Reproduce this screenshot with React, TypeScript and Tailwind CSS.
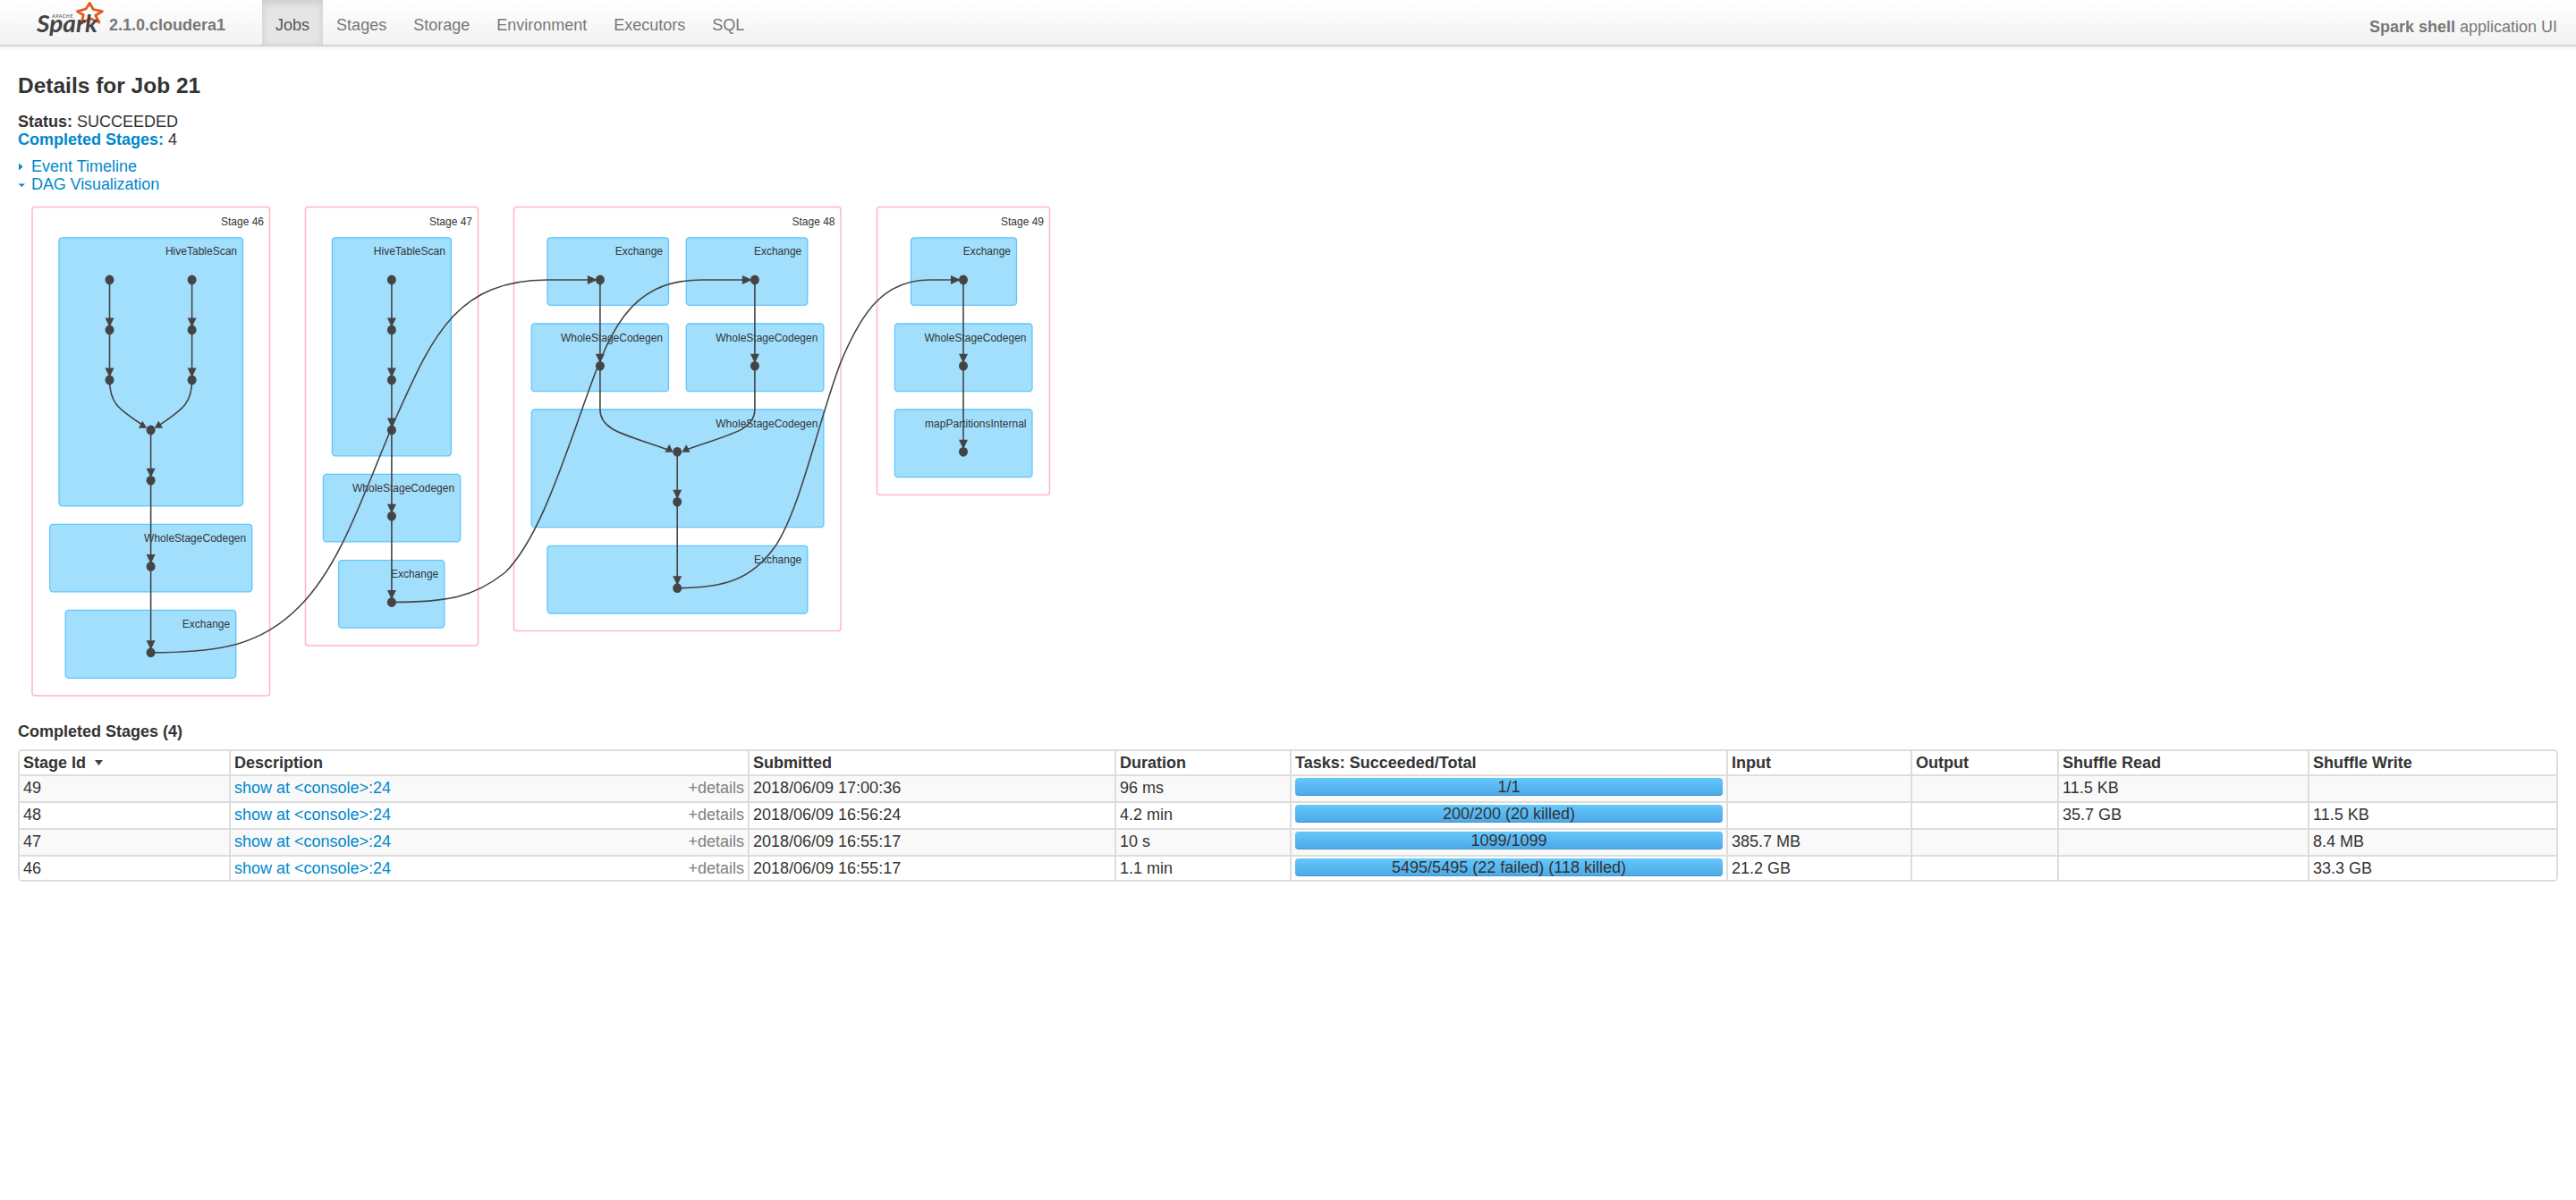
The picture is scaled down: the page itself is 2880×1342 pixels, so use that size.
import React from "react";

const FONT = "font-['Liberation_Sans',Arial,sans-serif]";

type Box = { x: number; y: number; w: number; h: number; label: string };

const stages: Box[] = [
  { x: 36, y: 231.5, w: 265.5, h: 546.5, label: "Stage 46" },
  { x: 341.5, y: 231.5, w: 193, h: 490.5, label: "Stage 47" },
  { x: 574.5, y: 231.5, w: 365.5, h: 474, label: "Stage 48" },
  { x: 980.5, y: 231.5, w: 193, h: 322, label: "Stage 49" },
];

const clusters: Box[] = [
  { x: 66, y: 265.8, w: 205.5, h: 300, label: "HiveTableScan" },
  { x: 55.7, y: 586.3, w: 226, h: 75.5, label: "WholeStageCodegen" },
  { x: 73.2, y: 682.4, w: 190.5, h: 76, label: "Exchange" },
  { x: 371.4, y: 265.8, w: 133, h: 244, label: "HiveTableScan" },
  { x: 361.4, y: 530.4, w: 153.2, h: 75.5, label: "WholeStageCodegen" },
  { x: 378.6, y: 626.6, w: 118.2, h: 75.5, label: "Exchange" },
  { x: 612, y: 265.8, w: 135.5, h: 75.5, label: "Exchange" },
  { x: 767.3, y: 265.8, w: 135.5, h: 75.5, label: "Exchange" },
  { x: 594.3, y: 362, w: 153.2, h: 75.7, label: "WholeStageCodegen" },
  { x: 767.3, y: 362, w: 153.6, h: 75.7, label: "WholeStageCodegen" },
  { x: 594.3, y: 458, w: 326.6, h: 131.7, label: "WholeStageCodegen" },
  { x: 612, y: 610.3, w: 290.8, h: 75.7, label: "Exchange" },
  { x: 1018.5, y: 265.8, w: 118, h: 75.5, label: "Exchange" },
  { x: 1000.4, y: 362, w: 153.6, h: 75.7, label: "WholeStageCodegen" },
  { x: 1000.4, y: 458, w: 153.6, h: 75.7, label: "mapPartitionsInternal" },
];

const dots: [number, number][] = [
  [122.5, 313], [122.5, 369], [122.5, 425], [214.6, 313], [214.6, 369], [214.6, 425],
  [168.6, 481], [168.6, 537.3], [168.6, 633.5], [168.6, 729.8],
  [437.9, 313], [437.9, 369], [437.9, 425], [437.9, 481], [437.9, 577.3], [437.9, 673.5],
  [670.9, 313], [843.9, 313], [670.9, 409.3], [843.9, 409.3], [757.2, 505.3], [757.2, 561.3], [757.2, 657.7],
  [1077, 313], [1077, 409.3], [1077, 505.3],
];

const edges: string[] = [
  "M122.5 313V369", "M122.5 369V425", "M214.6 313V369", "M214.6 369V425",
  "M122.5 425C122.5 452 134 458 159 475",
  "M214.6 425C214.6 452 203 458 179 475",
  "M168.6 481V537", "M168.6 537V633", "M168.6 633V729.8",
  "M437.9 313V369", "M437.9 369V425", "M437.9 425V481", "M437.9 481V577", "M437.9 577V673.5",
  "M670.9 313V409", "M843.9 313V409",
  "M670.9 409V458C670.9 482 700 486 747 503",
  "M843.9 409V458C843.9 482 814 486 767 503",
  "M757.2 505V561", "M757.2 561V657.7",
  "M1077 313V409", "M1077 409V505",
  "M168.6 729.8C245 729.8 292 722 335 678C385 628 412 535 445 462C483 378 510 313 612 313L660 313",
  "M437.9 673.5C500 673.5 530 668 565 640C600 605 625 530 650 460C680 375 700 313 785 313L835 313",
  "M757.2 657.7C810 657.7 840 648 866 612C895 570 915 470 940 405C965 345 990 313 1040 313L1068 313",
];

const downArrows: [number, number][] = [
  [122.5, 369], [122.5, 425], [214.6, 369], [214.6, 425], [168.6, 537.3], [168.6, 633.5], [168.6, 729.8],
  [437.9, 369], [437.9, 425], [437.9, 481], [437.9, 577.3], [437.9, 673.5],
  [670.9, 409.3], [843.9, 409.3], [757.2, 561.3], [757.2, 657.7], [1077, 409.3], [1077, 505.3],
];

const rightArrows: [number, number][] = [[670.9, 313], [843.9, 313], [1077, 313]];

function Dag() {
  return (
    <svg
      viewBox="20 216 1180 570"
      width={1180}
      height={570}
      className="block"
      fontFamily="'Liberation Sans', Arial, sans-serif"
    >
      {stages.map((s) => (
        <g key={s.label}>
          <rect x={s.x} y={s.y} width={s.w} height={s.h} rx={3} fill="#fff" stroke="#ffb6c4" strokeWidth={1.5} />
          <text x={s.x + s.w - 6.5} y={s.y + 20} textAnchor="end" fontSize={12} fill="#333">
            {s.label}
          </text>
        </g>
      ))}
      {clusters.map((c, i) => (
        <g key={i}>
          <rect x={c.x} y={c.y} width={c.w} height={c.h} rx={3.5} fill="#a2dffd" stroke="#5fc6fa" strokeWidth={1.3} />
          <text x={c.x + c.w - 6.5} y={c.y + 19.5} textAnchor="end" fontSize={12} fill="#333">
            {c.label}
          </text>
        </g>
      ))}
      {edges.map((d, i) => (
        <path key={i} d={d} fill="none" stroke="#444" strokeWidth={1.6} />
      ))}
      {downArrows.map(([x, y], i) => (
        <path key={i} d={`M${x - 5} ${y - 13.5}H${x + 5}L${x} ${y - 3}Z`} fill="#444" />
      ))}
      {rightArrows.map(([x, y], i) => (
        <path key={i} d={`M${x - 14} ${y - 5}V${y + 5}L${x - 3} ${y}Z`} fill="#444" />
      ))}
      <path d="M159.3 470.7L155 478.7H164.3Z" fill="#444" />
      <path d="M177.3 470.7L172.7 478.7H182Z" fill="#444" />
      <path d="M748.3 496.7L743.3 505.7H752.5Z" fill="#444" />
      <path d="M767.3 497.2L762.2 505.7H771.5Z" fill="#444" />
      {dots.map(([x, y], i) => (
        <ellipse key={i} cx={x} cy={y} rx={5} ry={5.4} fill="#444" />
      ))}
    </svg>
  );
}

function SparkLogo() {
  return (
    <svg width={84} height={44} viewBox="0 0 84 44" className="block" fontFamily="Lato, 'Liberation Sans', sans-serif">
      <path
        d="M60.3 3.5L64.3 10.5L74.3 12.7L66.7 17.3L71 25L61 20.7L51 26L53.3 16.7L46.5 12.7L56 10Z"
        fill="none"
        stroke="#e25a1c"
        strokeWidth={2.8}
        strokeLinejoin="round"
      />
      <text x={18} y={19.5} fontSize={5.2} fontWeight={700} letterSpacing={0.6} fill="#666">
        APACHE
      </text>
      <text x={1} y={36} fontSize={27} fontWeight={700} fontStyle="italic" fill="#444" textLength={68} lengthAdjust="spacingAndGlyphs">
        Spark
      </text>
    </svg>
  );
}

const navItems = ["Jobs", "Stages", "Storage", "Environment", "Executors", "SQL"];

const rows = [
  ["49", "2018/06/09 17:00:36", "96 ms", "1/1", "", "", "11.5 KB", ""],
  ["48", "2018/06/09 16:56:24", "4.2 min", "200/200 (20 killed)", "", "", "35.7 GB", "11.5 KB"],
  ["47", "2018/06/09 16:55:17", "10 s", "1099/1099", "385.7 MB", "", "", "8.4 MB"],
  ["46", "2018/06/09 16:55:17", "1.1 min", "5495/5495 (22 failed) (118 killed)", "21.2 GB", "", "", "33.3 GB"],
];

const headCell = "border-l-2 border-[#ddd] px-[4px] text-left font-bold h-[26px] leading-[26px] align-top";

export default function App() {
  return (
    <div className={`${FONT} min-h-[1342px] bg-white text-[18px] leading-[20px] text-[#333]`}>
      <nav className="flex h-[52px] items-stretch justify-between border-b-2 border-[#d4d4d4] bg-gradient-to-b from-white to-[#f2f2f2] shadow-[0_1px_6px_rgba(0,0,0,0.08)]">
        <div className="flex items-stretch">
          <div className="ml-[40px] w-[82px]">
            <SparkLogo />
          </div>
          <span className="mt-[18px] text-[18px] font-bold text-[#777]">2.1.0.cloudera1</span>
          <ul className="ml-[41px] flex">
            {navItems.map((n, i) => (
              <li
                key={n}
                className={
                  i === 0
                    ? "flex h-[50px] items-center bg-[#e5e5e5] px-[15px] pt-[6px] text-[#555] shadow-[inset_0_3px_8px_rgba(0,0,0,0.12)]"
                    : "flex h-[50px] items-center px-[15px] pt-[6px] text-[#777]"
                }
              >
                {n}
              </li>
            ))}
          </ul>
        </div>
        <p className="mr-[21px] mt-[20px] text-[#777]">
          <strong>Spark shell</strong> application UI
        </p>
      </nav>

      <main className="px-[20px]">
        <h1 className="mt-[26px] text-[24.5px] font-bold leading-[36px] text-[#333]">Details for Job 21</h1>
        <ul className="mt-[12px]">
          <li>
            <strong>Status:</strong> SUCCEEDED
          </li>
          <li>
            <a className="font-bold text-[#0088cc]">Completed Stages:</a> 4
          </li>
        </ul>
        <div className="mt-[10px] text-[#0088cc]">
          <div className="flex items-center">
            <svg width={15} height={20} viewBox="0 0 15 20" className="block">
              <path d="M1 6.5L5.5 10.5L1 14.5Z" fill="#0088cc" />
            </svg>
            <span>Event Timeline</span>
          </div>
          <div className="flex items-center">
            <svg width={15} height={20} viewBox="0 0 15 20" className="block">
              <path d="M0.5 9.5H8L4.25 13Z" fill="#0088cc" />
            </svg>
            <span className="tracking-[-0.1px]">DAG Visualization</span>
          </div>
        </div>
        <Dag />
        <h4 className="mt-[19px] font-bold leading-[26px] text-[#333]">Completed Stages (4)</h4>
        <div className="mt-[7px] overflow-hidden rounded-[5px] border-2 border-l-0 border-[#ddd]">
          <table className="w-full table-fixed border-separate border-spacing-0">
            <colgroup>
              <col className="w-[236px]" />
              <col className="w-[580px]" />
              <col className="w-[410px]" />
              <col className="w-[196px]" />
              <col className="w-[488px]" />
              <col className="w-[206px]" />
              <col className="w-[164px]" />
              <col className="w-[280px]" />
              <col className="w-[280px]" />
            </colgroup>
            <thead>
              <tr>
                <th className={headCell}>
                  <span className="inline-flex items-center gap-[10px]">
                    Stage Id
                    <svg width={9} height={6} viewBox="0 0 9 6" className="block">
                      <path d="M0 0H9L4.5 6Z" fill="#444" />
                    </svg>
                  </span>
                </th>
                <th className={headCell}>Description</th>
                <th className={headCell}>Submitted</th>
                <th className={headCell}>Duration</th>
                <th className={headCell}>Tasks: Succeeded/Total</th>
                <th className={headCell}>Input</th>
                <th className={headCell}>Output</th>
                <th className={headCell}>Shuffle Read</th>
                <th className={headCell}>Shuffle Write</th>
              </tr>
            </thead>
            <tbody>
              {rows.map((r, i) => {
                const cell =
                  (i === 3 ? "h-[28px] " : "h-[30px] ") +
                  "border-l-2 border-t-2 border-[#ddd] px-[4px] leading-[26px] align-top";
                return (
                  <tr key={r[0]} className={i % 2 === 0 ? "bg-[#f9f9f9]" : "bg-white"}>
                    <td className={cell}>{r[0]}</td>
                    <td className={cell}>
                      <div className="flex justify-between">
                        <a className="text-[#0088cc]">show at &lt;console&gt;:24</a>
                        <span className="text-[#808080]">+details</span>
                      </div>
                    </td>
                    <td className={cell}>{r[1]}</td>
                    <td className={cell}>{r[2]}</td>
                    <td className={cell}>
                      <div className="mt-[2px] h-[20px] rounded-[4px] bg-gradient-to-b from-[#64c8fb] to-[#4ca8e8] text-center leading-[20px] text-[#333] shadow-[inset_0_-1px_0_rgba(0,0,0,0.12)]">
                        {r[3]}
                      </div>
                    </td>
                    <td className={cell}>{r[4]}</td>
                    <td className={cell}>{r[5]}</td>
                    <td className={cell}>{r[6]}</td>
                    <td className={cell}>{r[7]}</td>
                  </tr>
                );
              })}
            </tbody>
          </table>
        </div>
      </main>
    </div>
  );
}
